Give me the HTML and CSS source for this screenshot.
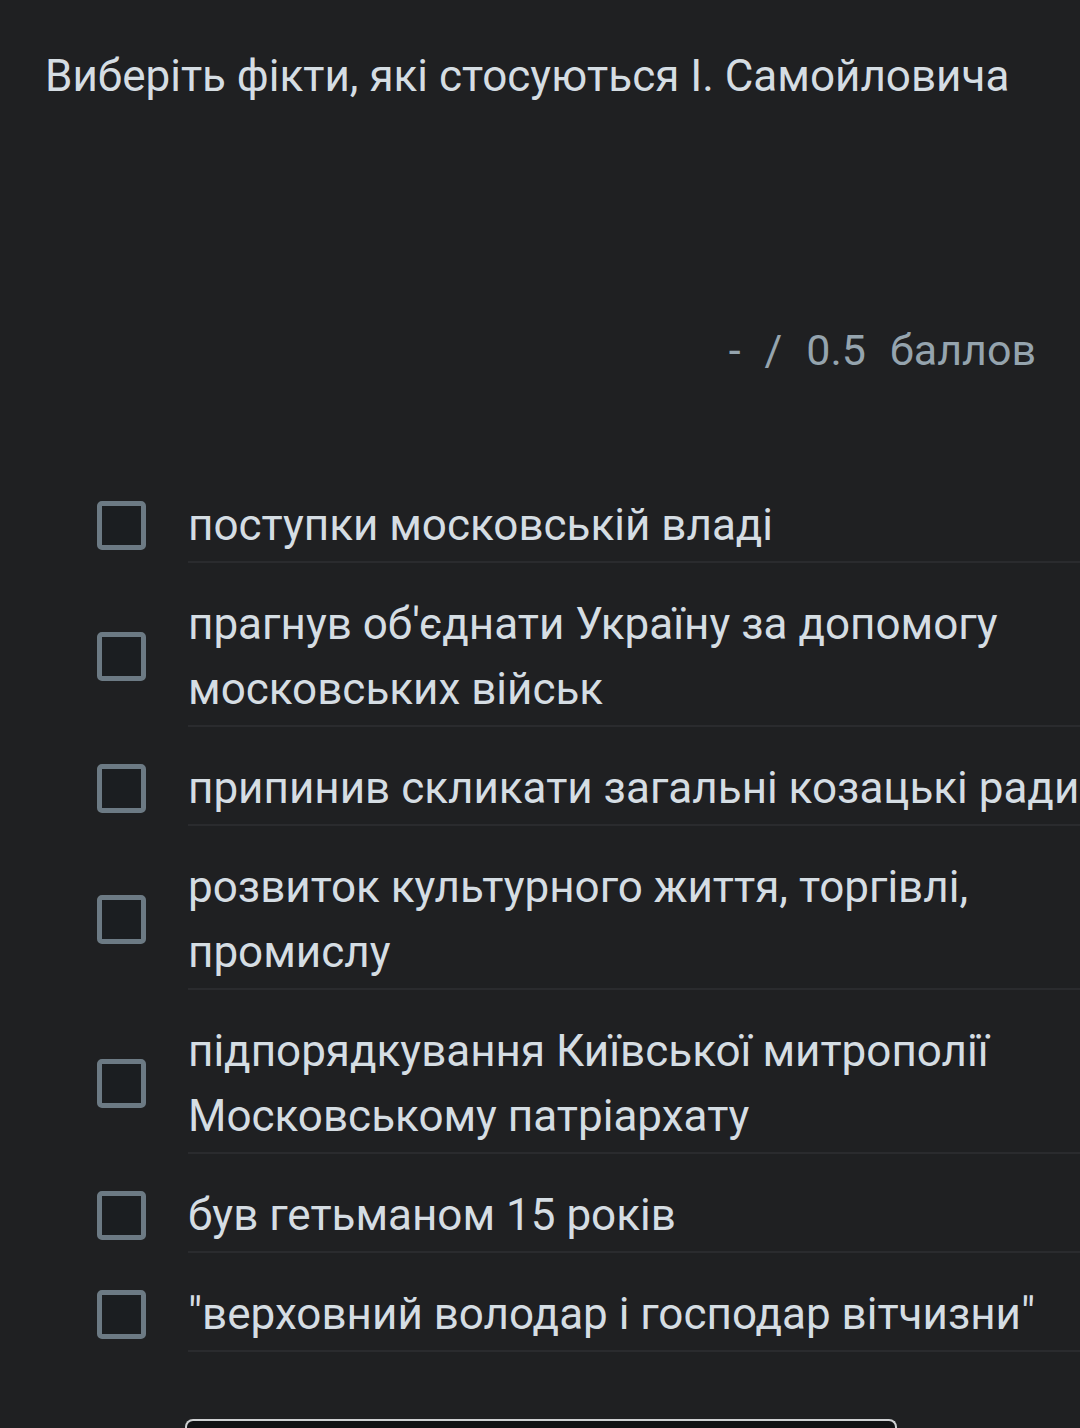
FILE: index.html
```html
<!DOCTYPE html>
<html lang="uk">
<head>
<meta charset="utf-8">
<link rel="stylesheet" href="styles.css">
</head>
<body>
<main class="question">
  <h1 class="title">Виберіть фікти, які стосуються І. Самойловича</h1>
  <div class="score"><span>-</span><span>/</span><span>0.5</span><span>баллов</span></div>
  <ul class="options">
    <li class="option"><span class="check"></span><span class="label">поступки московській владі</span></li>
    <li class="option"><span class="check"></span><span class="label">прагнув об'єднати Україну за допомогу московських військ</span></li>
    <li class="option"><span class="check"></span><span class="label">припинив скликати загальні козацькі ради</span></li>
    <li class="option"><span class="check"></span><span class="label">розвиток культурного життя, торгівлі, промислу</span></li>
    <li class="option"><span class="check"></span><span class="label">підпорядкування Київської митрополії Московському патріархату</span></li>
    <li class="option"><span class="check"></span><span class="label">був гетьманом 15 років</span></li>
    <li class="option"><span class="check"></span><span class="label">"верховний володар і господар вітчизни"</span></li>
  </ul>
  <div class="field"></div>
</main>
</body>
</html>
```

FILE: styles.css
```css
html, body {
  margin: 0;
  padding: 0;
  background: #1f2022;
  height: 100%;
  overflow: hidden;
}
body {
  font-family: Roboto, "Noto Sans", sans-serif;
  color: #d5dde3;
}
.question {
  display: flex;
  flex-direction: column;
}
.title {
  margin: 0;
  padding: 52px 0 0 45px;
  font-size: 44px;
  font-weight: 400;
  line-height: 48px;
  color: #d5dde3;
  white-space: nowrap;
}
.score {
  display: flex;
  justify-content: flex-end;
  gap: 24px;
  padding: 226px 44px 0 0;
  font-size: 43px;
  line-height: 48px;
  color: #95a4ae;
}
.options {
  list-style: none;
  margin: 0;
  padding: 90px 0 0 0;
}
.option {
  display: flex;
  align-items: center;
  padding: 29px 0 0 97px;
}
.check {
  flex: none;
  width: 39px;
  height: 39px;
  border: 5px solid #6c7a84;
  border-radius: 5px;
  background: #1b1e21;
  margin: 0 42px 6px 0;
}
.label {
  flex: 1;
  font-size: 44px;
  line-height: 65px;
  padding-bottom: 3px;
  border-bottom: 2px solid #2a2b2e;
  white-space: normal;
}
.field {
  margin: 67px 0 0 185px;
  width: 708px;
  height: 40px;
  border: 2px solid #cfd1d3;
  border-bottom: none;
  border-radius: 8px 8px 0 0;
  background: #111214;
}
```
